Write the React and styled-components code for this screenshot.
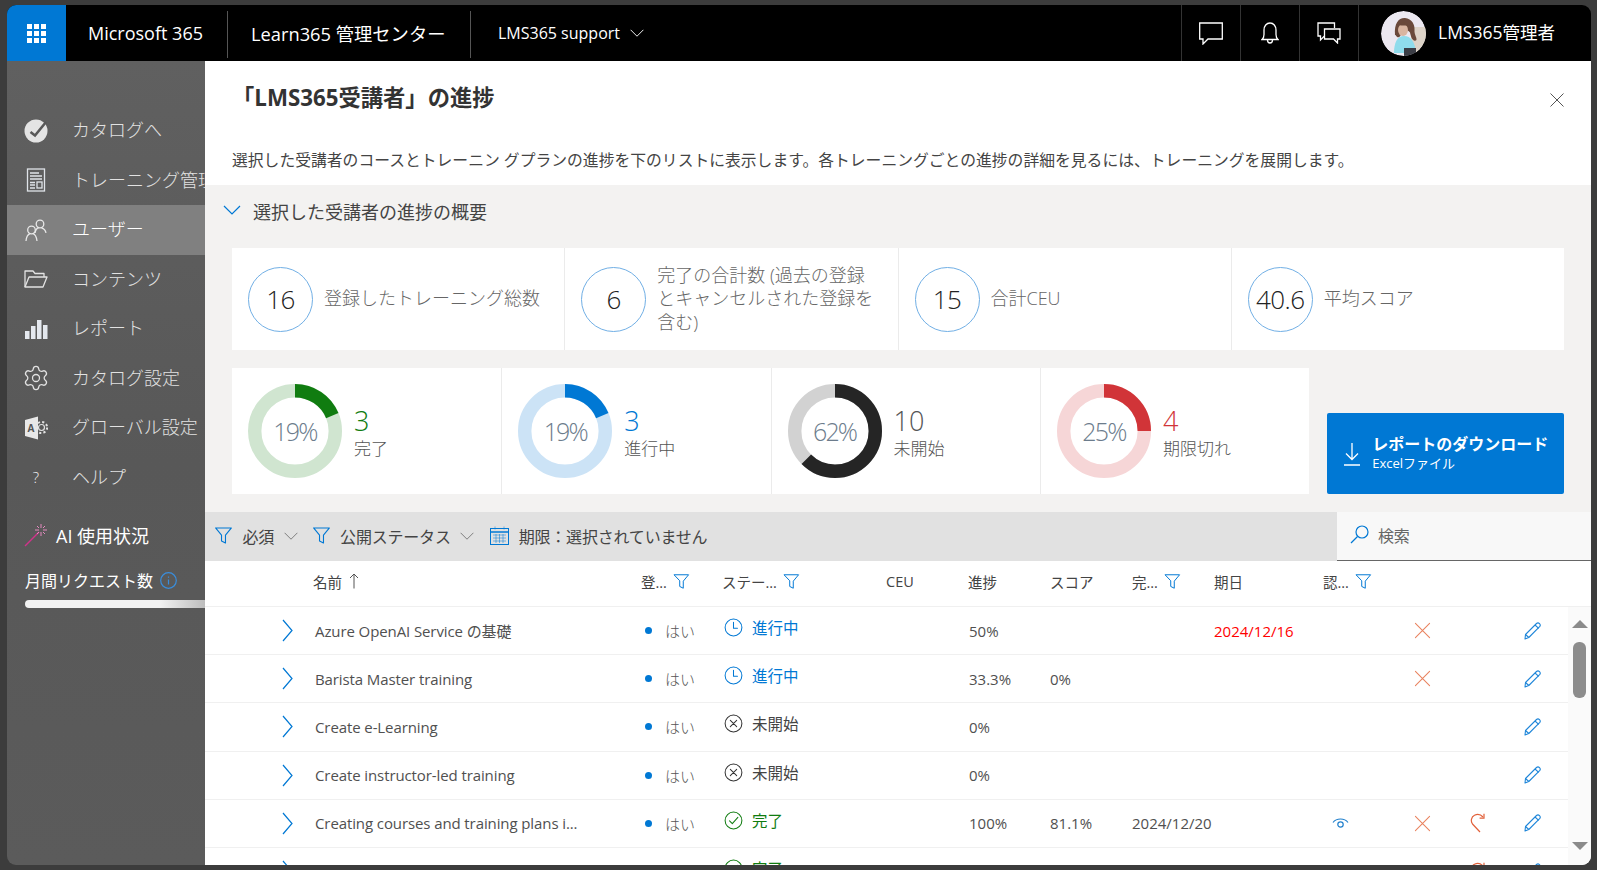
import React from 'react'
import styled, { createGlobalStyle } from 'styled-components'
import { Settings } from 'lucide-react'

const GlobalStyle = createGlobalStyle`
    html, body{
        margin: 0;
        padding: 0;
        height: 100%;
        overflow: hidden;
        background: #3c3c3c;
    }
    *{
        box-sizing: border-box;
    }
    body{
        font-family: "Open Sans", "Noto Sans CJK JP", sans-serif;
    }
`

const Page = styled.div`
    height: 870px;
    padding: 5px 6px 5px 7px;
`
const Window = styled.div`
    height: 860px;
    display: flex;
    flex-direction: column;
    overflow: hidden;
    border-radius: 9px;
`
const TopBar = styled.header`
    height: 56px;
    flex: none;
    display: flex;
    align-items: stretch;
    background: #000;
    color: #fff;
`
const Waffle = styled.div`
    width: 59px;
    background: #0078d4;
    display: flex;
    align-items: center;
    justify-content: center;
`
const Brand = styled.div`
    display: flex;
    align-items: center;
    font-size: ${p => p.$size || 18}px;
    padding-left: ${p => p.$left}px;
    width: ${p => p.$width}px;
    white-space: nowrap;
    svg{
        margin-left: 10px;
    }
`
const BarDivider = styled.div`
    width: 1px;
    height: 47px;
    align-self: center;
    margin-top: 2px;
    background: #555;
`
const Spacer = styled.div`
    flex: 1;
`
const IconCell = styled.div`
    width: 59px;
    display: flex;
    align-items: center;
    justify-content: center;
    border-left: 1px solid #333;
`
const UserCell = styled.div`
    width: 233px;
    display: flex;
    align-items: center;
    gap: 12px;
    padding-left: 22px;
    border-left: 1px solid #333;
    font-size: 17.5px;
    svg{
        border-radius: 50%;
    }
`
const UserName = styled.span`
    margin-bottom: 4px;
`
const Body = styled.div`
    flex: 1;
    display: flex;
    min-height: 0;
`
const Sidebar = styled.nav`
    width: 198px;
    flex: none;
    padding-top: 45px;
    overflow: hidden;
    background: linear-gradient(#606060, #585858 50%, #5b5b5b);
    color: #e2e2e2;
`
const NavRow = styled.div`
    height: 49.5px;
    display: flex;
    align-items: center;
    background: ${p => (p.$active ? '#808080' : 'transparent')};
    color: ${p => (p.$active ? '#fff' : '#e2e2e2')};
    font-size: 18px;
    font-weight: 300;
    white-space: nowrap;
`
const NavIcon = styled.span`
    width: 65px;
    padding-left: 17px;
    flex: none;
    display: flex;
    align-items: center;
`
const NavLabel = styled.span`
    margin-bottom: 3px;
`
const GearWrap = styled.span`
    display: flex;
    margin: -2px;
`
const Question = styled.span`
    width: 24px;
    text-align: center;
    font-size: 15px;
    color: #f2f2f2;
`
const AiRow = styled.div`
    display: flex;
    align-items: center;
    gap: 8px;
    margin-top: 20px;
    padding-left: 17px;
    font-size: 18px;
    color: #fff;
`
const QuotaRow = styled.div`
    display: flex;
    align-items: center;
    gap: 7px;
    margin-top: 19.5px;
    padding-left: 18px;
    font-size: 16px;
    line-height: 26px;
    color: #fff;
`
const QuotaBar = styled.div`
    height: 8px;
    margin: 6px 0 0 18px;
    border-radius: 4px 0 0 4px;
    background: linear-gradient(90deg, #f2f2f2 75%, #bdbdbd);
`
const Panel = styled.main`
    flex: 1;
    min-width: 0;
    display: flex;
    flex-direction: column;
    background: #fff;
    overflow: hidden;
    position: relative;
`
const PanelHead = styled.div`
    height: 124px;
    flex: none;
    padding: 20px 27px 0;
    position: relative;
`
const Title = styled.h1`
    margin: 0;
    font-size: 22.3px;
    font-weight: 700;
    line-height: 34px;
    color: #333;
`
const Intro = styled.p`
    margin: 34px 0 0;
    font-size: 15.8px;
    line-height: 22px;
    color: #444;
    white-space: nowrap;
`
const CloseButton = styled.button`
    position: absolute;
    top: 32px;
    right: 27px;
    width: 14px;
    height: 14px;
    padding: 0;
    border: 0;
    background: none;
    display: flex;
`
const Summary = styled.section`
    height: 327px;
    flex: none;
    background: #f3f2f1;
    padding: 0 27px;
`
const SummaryHead = styled.div`
    height: 63px;
    margin-left: -9px;
    padding-bottom: 12px;
    display: flex;
    align-items: center;
    gap: 12px;
    font-size: 18px;
    color: #444;
`
const StatRow = styled.div`
    display: flex;
    height: 102px;
    background: #fff;
`
const StatCard = styled.div`
    flex: 1;
    display: flex;
    align-items: center;
    gap: 11px;
    padding: 0 15px 0 16px;
    border-left: ${p => (p.$first ? 'none' : '1px solid #ebebeb')};
`
const Circle = styled.div`
    width: 65px;
    height: 65px;
    flex: none;
    border: 1px solid #71afe5;
    border-radius: 50%;
    display: flex;
    align-items: center;
    justify-content: center;
    font-size: 26px;
    font-weight: 300;
    letter-spacing: -0.5px;
    color: #222;
`
const StatLabel = styled.div`
    font-size: 18px;
    font-weight: 300;
    line-height: 23.5px;
    color: #666;
`
const ProgressRow = styled.div`
    display: flex;
    gap: 18px;
    margin-top: 18px;
    height: 126px;
`
const DonutCard = styled.div`
    width: 269.3px;
    display: flex;
    align-items: center;
    gap: 12px;
    padding-left: 16px;
    background: #fff;
    border-left: ${p => (p.$first ? 'none' : '1px solid #ebebeb')};
`
const DonutGroup = styled.div`
    display: flex;
`
const DonutWrap = styled.div`
    width: 94px;
    height: 94px;
    flex: none;
    position: relative;
`
const DonutText = styled.span`
    position: absolute;
    inset: 0;
    display: flex;
    align-items: center;
    justify-content: center;
    font-size: 25px;
    font-weight: 300;
    letter-spacing: -1.8px;
    color: #6c7c8c;
`
const DonutInfo = styled.div`
    padding-top: 4px;
`
const DonutNumber = styled.div`
    font-size: 27px;
    font-weight: 300;
    line-height: 32px;
    color: ${p => p.$color};
`
const DonutLabel = styled.div`
    font-size: 17px;
    font-weight: 300;
    line-height: 24px;
    color: #555;
`
const DownloadButton = styled.button`
    flex: 1;
    align-self: flex-end;
    height: 81px;
    border: 0;
    border-radius: 2px;
    background: #0078d4;
    color: #fff;
    display: flex;
    align-items: center;
    gap: 12px;
    padding: 0 0 0 17px;
    text-align: left;
    font-family: inherit;
`
const DownloadTitle = styled.div`
    font-size: 16px;
    font-weight: 700;
    line-height: 22px;
`
const DownloadSub = styled.div`
    font-size: 13px;
    line-height: 17px;
    margin-bottom: 3px;
`
const FilterBar = styled.div`
    height: 49px;
    flex: none;
    display: flex;
    align-items: center;
    background: #e1e1e1;
    font-size: 16px;
    letter-spacing: -0.2px;
    color: #444;
    padding-left: 9px;
`
const FilterItem = styled.div`
    display: flex;
    align-items: center;
    gap: 9.5px;
    margin-bottom: 2px;
    margin-right: ${p => p.$gap || 16}px;
`
const SearchBox = styled.div`
    margin-left: auto;
    width: 254px;
    height: 49px;
    display: flex;
    align-items: center;
    gap: 9px;
    padding: 0 0 3px 13px;
    background: #f8f8f8;
    border-bottom: 1px solid #666;
    color: #666;
`
const columns = '110px 330px 77px 164px 82px 82px 82px 82px 109px 72px 55px 55px 55px 8px'
const HeadRow = styled.div`
    height: 46px;
    flex: none;
    display: grid;
    grid-template-columns: ${columns};
    align-items: center;
    padding-bottom: 5px;
    border-bottom: 1px solid #f0f0f0;
    font-size: 14.5px;
    color: #444;
`
const HeadCell = styled.div`
    grid-column: ${p => p.$col};
    display: flex;
    align-items: center;
    gap: ${p => p.$gap || 6}px;
    margin-left: ${p => p.$left || 0}px;
`
const TableArea = styled.div`
    flex: 1;
    min-height: 0;
    display: flex;
`
const Rows = styled.div`
    flex: 1;
    min-width: 0;
`
const Row = styled.div`
    height: 48.2px;
    display: grid;
    grid-template-columns: ${columns};
    align-items: center;
    border-bottom: 1px solid #f0f0f0;
    font-size: 15px;
    color: #505050;
`
const Expand = styled.div`
    padding-left: 77px;
    display: flex;
`
const NameCell = styled.div`
    white-space: nowrap;
    letter-spacing: -0.1px;
`
const Enrolled = styled.div`
    display: flex;
    align-items: center;
    gap: 13px;
    color: #555;
    font-weight: 300;
    &::before{
        content: '';
        width: 7px;
        height: 7px;
        border-radius: 50%;
        background: #0078d4;
    }
`
const Status = styled.div`
    display: flex;
    align-items: center;
    gap: 9px;
    padding-left: 2px;
    margin-bottom: 6px;
    font-size: 15.5px;
    color: ${p => p.$color};
`
const ProgressCell = styled.div`
    padding-left: 1px;
`
const DueDate = styled.div`
    color: ${p => (p.$late ? '#f00' : '#444')};
`
const ActionCell = styled.div`
    display: flex;
    justify-content: ${p => (p.$start ? 'flex-start' : 'center')};
    padding-left: ${p => (p.$start ? 9 : 0)}px;
`
const ScrollTrack = styled.div`
    width: 23px;
    flex: none;
    background: #fafafa;
    display: flex;
    flex-direction: column;
    align-items: center;
    padding-top: 13px;
`
const ArrowUp = styled.div`
    width: 0;
    height: 0;
    border-left: 8px solid transparent;
    border-right: 8px solid transparent;
    border-bottom: 8px solid #8a8a8a;
`
const ArrowDown = styled(ArrowUp)`
    border-bottom: 0;
    border-top: 8px solid #8a8a8a;
    margin-top: 144px;
`
const Thumb = styled.div`
    width: 13px;
    height: 56px;
    margin-top: 14px;
    border-radius: 6px;
    background: #8c8c8c;
`

const Line = ({ size = 24, children, color = 'currentColor', width = 1.3, box = 24 }) => (
    <svg width={size} height={size} viewBox={`0 0 ${box} ${box}`} fill="none" stroke={color} strokeWidth={width} strokeLinecap="round" strokeLinejoin="round">{children}</svg>
)
const FunnelIcon = ({ size = 19 }) => (
    <Line size={size} color="#0078d4" width={1.4}>
        <path d="M2 2.5h20l-7.5 9v10l-5-2.5v-7.5z" />
    </Line>
)
const ChevronDown = ({ color = '#777', size = 14 }) => (
    <Line size={size} color={color} width={1.6}><path d="M1.5 7l10.5 10.5L22.5 7" /></Line>
)
const ChevronRight = () => (
    <svg width="11" height="23" viewBox="0 0 11 23" fill="none" stroke="#0078d4" strokeWidth="1.2"><path d="M1 1l9 10.5L1 22" /></svg>
)
const ClockIcon = () => (
    <Line size={19} color="#0078d4"><circle cx="12" cy="12" r="10.6" /><path d="M12 5.5V13h5" /></Line>
)
const CrossCircleIcon = () => (
    <Line size={19} color="#333"><circle cx="12" cy="12" r="10.6" /><path d="M8 8l8 8M16 8l-8 8" /></Line>
)
const CheckCircleIcon = () => (
    <Line size={19} color="#107c10"><circle cx="12" cy="12" r="10.6" /><path d="M7 12.5l3.5 3.5 7-8" /></Line>
)
const CrossIcon = () => (
    <Line size={17} color="#e9835f" width={1.5}><path d="M2 2l20 20M22 2L2 22" /></Line>
)
const RedoIcon = () => (
    <svg width="16" height="20" viewBox="0 0 16 20" fill="none" stroke="#e2613a" strokeWidth="1.2"><path d="M10 19L2.5 11C.5 8.5 1 4 4.5 2.2 7.5.8 11 1.800 13 4" /><path d="M14 .8v4.400H9.600" /></svg>
)
const PencilIcon = () => (
    <svg width="18" height="18" viewBox="0 0 18 18" fill="none" stroke="#1f86d9" strokeWidth="1.1" strokeLinejoin="round"><path d="M1.500 12.500L12.500 1.500c1-.9 2.200-.7 3 .1s1 2 .1 3L4.800 15.500 1 17z" /><path d="M1.500 12.500l3.300 3M11 3l3.700 3.400" /></svg>
)
const EyeIcon = () => (
    <svg width="17" height="12" viewBox="0 0 17 12" fill="none" stroke="#1f7fcc" strokeWidth="1.200"><path d="M1 5.500C4.500 .8 12.500 .8 16 5.500" /><circle cx="8.500" cy="7.500" r="2.700" /></svg>
)
const Avatar = () => (
    <svg width="45" height="45" viewBox="0 0 45 45">
        <defs><filter id="soft"><feGaussianBlur stdDeviation="0.7" /></filter></defs>
        <circle cx="22.500" cy="22.500" r="22.500" fill="#ece8f0" />
        <g filter="url(#soft)">
            <rect x="30" y="16" width="15" height="29" fill="#ddd3c8" />
            <path d="M13 42c0-10 3-17 10-17s11 6 12 17z" fill="#8fdcec" />
            <path d="M14 24C13 12 18 6.500 24 7c7 .5 10 7 9.500 12s3.500 9 1.500 10.500c-4 1-5-4-6-8-3-4-7-2-9 1 0 3-3 6-5.500 1.500z" fill="#6b4a3a" />
            <ellipse cx="22" cy="19" rx="5" ry="6" fill="#d9b5a0" />
            <path d="M18 14c2-3 7-3 9 1-3-1-6 0-9-1z" fill="#6b4a3a" />
            <rect x="23" y="37" width="12" height="8" fill="#3a3c44" />
        </g>
    </svg>
)

const navIcons = {
    catalog: (
        <svg width="24" height="24" viewBox="0 0 24 24">
            <circle cx="12" cy="12" r="11.500" fill="#e4e4e4" />
            <path d="M6.500 13l4.500 3.500L22 3" fill="none" stroke="#595959" strokeWidth="2.600" />
        </svg>
    ),
    training: (
        <svg width="24" height="24" viewBox="0 0 24 24" fill="none" stroke="#dfe3e8" strokeWidth="1.300">
            <rect x="3.500" y="1" width="17" height="22" />
            <path d="M6 5h9M6 8h12M6 11h12M6 14.500h5M6 17h5M6 20h5" />
            <rect x="13" y="14" width="5" height="6" />
        </svg>
    ),
    users: (
        <svg width="24" height="24" viewBox="0 0 24 24" fill="none" stroke="#e8e8e8" strokeWidth="1.300">
            <circle cx="16" cy="6" r="3.800" />
            <path d="M11 15c.5-3 2-5 4-5.500M17.500 9.800c2.500.7 4 2.500 4.500 5" />
            <circle cx="7.500" cy="12" r="3.800" />
            <path d="M2 23c.3-3.500 2-6.500 4-7.300M9 15.700c2 .8 3.600 3.800 4 7.300" />
        </svg>
    ),
    folder: (
        <svg width="24" height="24" viewBox="0 0 24 24" fill="none" stroke="#e2e2e2" strokeWidth="1.300" strokeLinejoin="round">
            <path d="M1 20V4h8l2 2.500h9V10" />
            <path d="M1 20l4-10h18l-4 10z" />
        </svg>
    ),
    report: (
        <svg width="24" height="24" viewBox="0 0 24 24" fill="#e4e8ee">
            <rect x="1" y="14" width="4.500" height="8" />
            <rect x="7" y="9" width="4.500" height="13" />
            <rect x="13" y="3" width="4.500" height="19" />
            <rect x="19" y="8" width="4.500" height="14" />
        </svg>
    ),
    global: (
        <svg width="24" height="24" viewBox="0 0 24 24">
            <path d="M1 4l13-3.500v23L1 20z" fill="#e8e8e8" />
            <text x="3.500" y="15.500" fontSize="10" fontWeight="700" fill="#555" fontFamily="Open Sans">A</text>
            <circle cx="17.500" cy="11.500" r="3" fill="none" stroke="#e2e2e2" strokeWidth="1.200" />
            <circle cx="17.500" cy="11.500" r="5.600" fill="none" stroke="#e2e2e2" strokeWidth="2" strokeDasharray="2.200 2.200" />
        </svg>
    ),
}

const navItems = [
    { icon: navIcons.catalog, label: 'カタログへ' },
    { icon: navIcons.training, label: 'トレーニング管理' },
    { icon: navIcons.users, label: 'ユーザー', active: true },
    { icon: navIcons.folder, label: 'コンテンツ' },
    { icon: navIcons.report, label: 'レポート' },
    { icon: <GearWrap><Settings size={28} strokeWidth={1.1} /></GearWrap>, label: 'カタログ設定' },
    { icon: navIcons.global, label: 'グローバル設定' },
    { icon: <Question>?</Question>, label: 'ヘルプ' },
]

const stats = [
    { value: '16', label: '登録したトレーニング総数' },
    { value: '6', label: '完了の合計数 (過去の登録とキャンセルされた登録を含む)' },
    { value: '15', label: '合計CEU' },
    { value: '40.6', label: '平均スコア' },
]

const donuts = [
    { pct: 18.75, text: '19%', value: 3, label: '完了', color: '#107c10', track: '#d0e5d0', numColor: '#107c10' },
    { pct: 18.75, text: '19%', value: 3, label: '進行中', color: '#0078d4', track: '#cce3f6', numColor: '#0078d4' },
    { pct: 62.5, text: '62%', value: 10, label: '未開始', color: '#252525', track: '#d2d2d2', numColor: '#555' },
    { pct: 25, text: '25%', value: 4, label: '期限切れ', color: '#d13438', track: '#f6d6d7', numColor: '#d13438' },
]

const statusKinds = {
    progress: { icon: <ClockIcon />, text: '進行中', color: '#0078d4' },
    waiting: { icon: <CrossCircleIcon />, text: '未開始', color: '#444' },
    done: { icon: <CheckCircleIcon />, text: '完了', color: '#107c10' },
}

const rows = [
    { name: 'Azure OpenAI Service の基礎', status: 'progress', progress: '50%', due: '2024/12/16', cancel: true },
    { name: 'Barista Master training', status: 'progress', progress: '33.3%', score: '0%', cancel: true },
    { name: 'Create e-Learning', status: 'waiting', progress: '0%' },
    { name: 'Create instructor-led training', status: 'waiting', progress: '0%' },
    { name: 'Creating courses and training plans i...', status: 'done', progress: '100%', score: '81.1%', finished: '2024/12/20', cert: true, cancel: true, redo: true },
    { status: 'done', redo: true },
]

function Donut({ pct, text, color, track }) {
    const r = 40.3
    const c = 2 * Math.PI * r
    return (
        <DonutWrap>
            <svg width="94" height="94" viewBox="0 0 94 94">
                <circle cx="47" cy="47" r={r} fill="none" stroke={track} strokeWidth="13.400" />
                <circle cx="47" cy="47" r={r} fill="none" stroke={color} strokeWidth="13.400" strokeDasharray={`${c * pct / 100} ${c}`} transform="rotate(-90 47 47)" />
            </svg>
            <DonutText>{text}</DonutText>
        </DonutWrap>
    )
}

function App() {
    return (
        <Page>
            <GlobalStyle />
            <Window>
                <TopBar>
                    <Waffle>
                        <svg width="19" height="19" viewBox="0 0 19 19" fill="#fff">
                            {[0, 7, 14].map(y => [0, 7, 14].map(x => <rect key={`${x}${y}`} x={x} y={y} width="5" height="5" />))}
                        </svg>
                    </Waffle>
                    <Brand $left={22} $width={161}>Microsoft 365</Brand>
                    <BarDivider />
                    <Brand $left={23} $width={242} $size={18.3}>Learn365 管理センター</Brand>
                    <BarDivider />
                    <Brand $left={27} $size={16}>LMS365 support<ChevronDown color="#fff" size={14} /></Brand>
                    <Spacer />
                    <IconCell>
                        <svg width="24" height="23" viewBox="0 0 24 23" fill="none" stroke="#fff" strokeWidth="1.300"><path d="M.7 1h22.600v16H9l-5 5v-5H.7z" /></svg>
                    </IconCell>
                    <IconCell>
                        <svg width="18" height="22" viewBox="0 0 18 22" fill="none" stroke="#fff" strokeWidth="1.300"><path d="M1 17.500c1.500-1 2-2.500 2-5V8c0-4 2.500-7 6-7s6 3 6 7v4.500c0 2.500.5 4 2 5z" /><path d="M6.500 18c0 4 5 4 5 0" /></svg>
                    </IconCell>
                    <IconCell>
                        <svg width="24" height="22" viewBox="0 0 24 22" fill="none" stroke="#fff" strokeWidth="1.300"><path d="M17.500 6V1H1v13h2.500v4l4-4" /><path d="M7.500 7H23v10h-2.500v4l-4-4h-9z" /></svg>
                    </IconCell>
                    <UserCell><Avatar /><UserName>LMS365管理者</UserName></UserCell>
                </TopBar>
                <Body>
                    <Sidebar>
                        {navItems.map(item => (
                            <NavRow key={item.label} $active={item.active}>
                                <NavIcon>{item.icon}</NavIcon>
                                <NavLabel>{item.label}</NavLabel>
                            </NavRow>
                        ))}
                        <AiRow>
                            <svg width="24" height="24" viewBox="0 0 24 24" fill="none">
                                <path d="M1 23L15 9" stroke="#d0338a" strokeWidth="1.400" />
                                <path d="M17 1v4M17 9v4M11 7h4M19 7h4M13 3l2 2M21 3l-2 2M13 11l2-2M21 11l-2-2" stroke="#e58abf" strokeWidth="1" />
                            </svg>
                            AI 使用状況
                        </AiRow>
                        <QuotaRow>
                            月間リクエスト数
                            <svg width="17" height="17" viewBox="0 0 17 17" fill="none" stroke="#3a8ddb" strokeWidth="1.200"><circle cx="8.500" cy="8.500" r="7.800" /><path d="M8.500 7.500v5M8.500 4.500v1.300" /></svg>
                        </QuotaRow>
                        <QuotaBar />
                    </Sidebar>
                    <Panel>
                        <PanelHead>
                            <Title>「LMS365受講者」の進捗</Title>
                            <Intro>選択した受講者のコースとトレーニン グプランの進捗を下のリストに表示します。各トレーニングごとの進捗の詳細を見るには、トレーニングを展開します。</Intro>
                            <CloseButton aria-label="close">
                                <svg width="14" height="14" viewBox="0 0 14 14" stroke="#555" strokeWidth="1"><path d="M.5.500l13 13M13.500.500l-13 13" /></svg>
                            </CloseButton>
                        </PanelHead>
                        <Summary>
                            <SummaryHead>
                                <svg width="18" height="11" viewBox="0 0 18 11" fill="none" stroke="#0078d4" strokeWidth="1.200"><path d="M1 1l8 8 8-8" /></svg>
                                選択した受講者の進捗の概要
                            </SummaryHead>
                            <StatRow>
                                {stats.map((s, i) => (
                                    <StatCard key={s.value} $first={i === 0}>
                                        <Circle>{s.value}</Circle>
                                        <StatLabel>{s.label}</StatLabel>
                                    </StatCard>
                                ))}
                            </StatRow>
                            <ProgressRow>
                                <DonutGroup>
                                    {donuts.map((d, i) => (
                                        <DonutCard key={d.label} $first={i === 0}>
                                            <Donut {...d} />
                                            <DonutInfo>
                                                <DonutNumber $color={d.numColor}>{d.value}</DonutNumber>
                                                <DonutLabel>{d.label}</DonutLabel>
                                            </DonutInfo>
                                        </DonutCard>
                                    ))}
                                </DonutGroup>
                                <DownloadButton>
                                    <svg width="16" height="24" viewBox="0 0 16 24" fill="none" stroke="#fff" strokeWidth="1.300"><path d="M8 1v16M2 11.500l6 6 6-6M0 23h16" /></svg>
                                    <div>
                                        <DownloadTitle>レポートのダウンロード</DownloadTitle>
                                        <DownloadSub>Excelファイル</DownloadSub>
                                    </div>
                                </DownloadButton>
                            </ProgressRow>
                        </Summary>
                        <FilterBar>
                            <FilterItem $gap={14}><FunnelIcon />必須<ChevronDown /></FilterItem>
                            <FilterItem $gap={16}><FunnelIcon />公開ステータス<ChevronDown /></FilterItem>
                            <FilterItem>
                                <svg width="19" height="19" viewBox="0 0 19 19" fill="none" stroke="#0078d4" strokeWidth="1"><rect x=".5" y="2.500" width="18" height="16" /><path d="M.5 6h18" strokeWidth="1.500" /><path d="M5 .5v3M14 .5v3M3 9h13M3 12h13M3 15h13M6 8v9M9.500 8v9M13 8v9" strokeWidth=".5" /></svg>
                                期限：選択されていません
                            </FilterItem>
                            <SearchBox>
                                <svg width="19" height="19" viewBox="0 0 19 19" fill="none" stroke="#0078d4" strokeWidth="1.200"><circle cx="12" cy="7" r="6" /><path d="M7.500 11.500L1 18" /></svg>
                                検索
                            </SearchBox>
                        </FilterBar>
                        <HeadRow>
                            <HeadCell $col={2} $left={-2} $gap={7}>名前<svg width="10" height="16" viewBox="0 0 10 16" fill="none" stroke="#555"><path d="M5 15.500V1M1 5l4-4 4 4" /></svg></HeadCell>
                            <HeadCell $col={3} $left={-4}>登...<FunnelIcon size={17} /></HeadCell>
                            <HeadCell $col={4}>ステー...<FunnelIcon size={17} /></HeadCell>
                            <HeadCell $col={5}>CEU</HeadCell>
                            <HeadCell $col={6}>進捗</HeadCell>
                            <HeadCell $col={7}>スコア</HeadCell>
                            <HeadCell $col={8}>完...<FunnelIcon size={17} /></HeadCell>
                            <HeadCell $col={9}>期日</HeadCell>
                            <HeadCell $col={10}>認...<FunnelIcon size={17} /></HeadCell>
                        </HeadRow>
                        <TableArea>
                            <Rows>
                                {rows.map((row, i) => {
                                    const kind = statusKinds[row.status]
                                    return (
                                        <Row key={i}>
                                            <Expand><ChevronRight /></Expand>
                                            <NameCell>{row.name}</NameCell>
                                            {row.name ? <Enrolled>はい</Enrolled> : <div />}
                                            <Status $color={kind.color}>{kind.icon}{kind.text}</Status>
                                            <div />
                                            <ProgressCell>{row.progress}</ProgressCell>
                                            <div>{row.score}</div>
                                            <div>{row.finished}</div>
                                            <DueDate $late={!!row.due}>{row.due}</DueDate>
                                            <ActionCell $start>{row.cert && <EyeIcon />}</ActionCell>
                                            <ActionCell>{row.cancel && <CrossIcon />}</ActionCell>
                                            <ActionCell>{row.redo && <RedoIcon />}</ActionCell>
                                            <ActionCell><PencilIcon /></ActionCell>
                                        </Row>
                                    )
                                })}
                            </Rows>
                            <ScrollTrack>
                                <ArrowUp />
                                <Thumb />
                                <ArrowDown />
                            </ScrollTrack>
                        </TableArea>
                    </Panel>
                </Body>
            </Window>
        </Page>
    )
}

export default App
